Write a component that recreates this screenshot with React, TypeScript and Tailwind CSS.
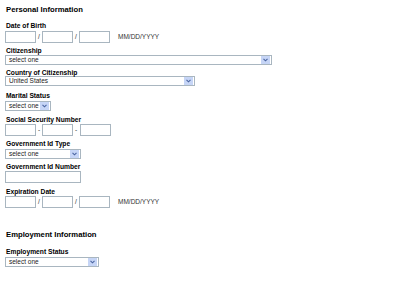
const font = { fontFamily: '"Liberation Sans", Arial, sans-serif' };

function Label({ text, className = '' }: { text: string; className?: string }) {
  return (
    <div className={`h-[7px] text-[6.7px] font-bold leading-[7px] text-black ${className}`}>{text}</div>
  );
}

function Heading({ text, className = '' }: { text: string; className?: string }) {
  return (
    <div className={`h-[10px] text-[7.7px] font-bold leading-[10px] text-black ${className}`}>{text}</div>
  );
}

function Box({ w, className = '' }: { w: string; className?: string }) {
  return <div className={`h-[12px] border border-[#a9b6c0] bg-white ${w} ${className}`} />;
}

function Select({ w, value, className = '' }: { w: string; value: string; className?: string }) {
  return (
    <div
      className={`flex h-[10px] items-center justify-between border border-[#a9b6c0] bg-white pl-[3px] pr-px ${w} ${className}`}
    >
      <span className="text-[6.5px] leading-[8px] text-[#222]">{value}</span>
      <span className="flex h-[8px] w-[9px] items-center justify-center bg-[#c6d5f6]">
        <svg width="5" height="4" viewBox="0 0 5 4">
          <path d="M0.5 0.8 L2.5 2.8 L4.5 0.8" fill="none" stroke="#4a64a0" strokeWidth="1.1" />
        </svg>
      </span>
    </div>
  );
}

function TripleInput({ sep, hint }: { sep: string; hint?: boolean }) {
  return (
    <div className="flex items-center">
      <Box w="w-[31px]" />
      <span className="w-[6px] text-center text-[6.5px] leading-[12px] text-[#333]">{sep}</span>
      <Box w="w-[31px]" />
      <span className="w-[6px] text-center text-[6.5px] leading-[12px] text-[#333]">{sep}</span>
      <Box w="w-[31px]" className={sep === '-' ? 'ml-px' : ''} />
      {hint && <span className="ml-[8px] text-[6.5px] leading-[12px] text-[#333]">MM/DD/YYYY</span>}
    </div>
  );
}

export default function App() {
  return (
    <div className="h-[286px] w-[400px] bg-white pl-[5px] pt-[5px]" style={font}>
      <Heading text="Personal Information" className="pl-px" />

      <Label text="Date of Birth" className="mt-[7px] pl-px" />
      <div className="mt-[2px]">
        <TripleInput sep="/" hint />
      </div>

      <Label text="Citizenship" className="mt-[4px] pl-px" />
      <Select w="w-[267px]" value="select one" className="mt-px" />

      <Label text="Country of Citizenship" className="mt-[4px] pl-px" />
      <Select w="w-[190px]" value="United States" />

      <Label text="Marital Status" className="mt-[6px] pl-px" />
      <Select w="w-[46px]" value="select one" className="mt-[2px]" />

      <Label text="Social Security Number" className="mt-[5px] pl-px" />
      <div className="mt-px">
        <TripleInput sep="-" />
      </div>

      <Label text="Government Id Type" className="mt-[4px] pl-px" />
      <Select w="w-[76px]" value="select one" className="mt-[2px]" />

      <Label text="Government Id Number" className="mt-[4px] pl-px" />
      <Box w="w-[76px]" className="mt-px h-[11px]" />

      <Label text="Expiration Date" className="mt-[5px] pl-px" />
      <div className="mt-px">
        <TripleInput sep="/" hint />
      </div>

      <Heading text="Employment Information" className="mt-[22px] pl-px" />

      <Label text="Employment Status" className="mt-[8px] pl-px" />
      <Select w="w-[94px]" value="select one" className="mt-[2px]" />
    </div>
  );
}
